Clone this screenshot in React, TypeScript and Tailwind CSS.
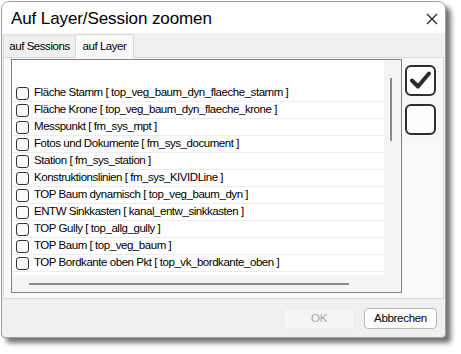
import React from "react";

const layers = [
  "Fläche Stamm [ top_veg_baum_dyn_flaeche_stamm ]",
  "Fläche Krone [ top_veg_baum_dyn_flaeche_krone ]",
  "Messpunkt [ fm_sys_mpt ]",
  "Fotos und Dokumente [ fm_sys_document ]",
  "Station [ fm_sys_station ]",
  "Konstruktionslinien [ fm_sys_KIVIDLine ]",
  "TOP Baum dynamisch [ top_veg_baum_dyn ]",
  "ENTW Sinkkasten [ kanal_entw_sinkkasten ]",
  "TOP Gully [ top_allg_gully ]",
  "TOP Baum [ top_veg_baum ]",
  "TOP Bordkante oben Pkt [ top_vk_bordkante_oben ]",
];

function CheckIcon() {
  return (
    <svg width="31" height="31" viewBox="0 0 31 31">
      <rect x="1" y="1" width="29" height="29" rx="5" fill="#fdfdfd" stroke="#2e2e2e" strokeWidth="2" />
      <path d="M7 15.5 L13 21.5 L24 8.5" fill="none" stroke="#2b2b2b" strokeWidth="4" strokeLinecap="round" strokeLinejoin="round" />
    </svg>
  );
}

function EmptyIcon() {
  return (
    <svg width="31" height="31" viewBox="0 0 31 31">
      <rect x="1" y="1" width="29" height="29" rx="5" fill="#fdfdfd" stroke="#2e2e2e" strokeWidth="2" />
    </svg>
  );
}

export default function App() {
  return (
    <div className="w-[461px] h-[354px] bg-white pt-px pl-px font-['Liberation_Sans',Arial,sans-serif] text-black">
      <div className="w-[445px] h-[337px] flex flex-col rounded-t-[8px] rounded-b-[4px] border border-[#9c9c9c] bg-[#f0f0f0] shadow-[5px_5px_5px_rgba(0,0,0,0.55)] overflow-hidden">
        {/* title bar */}
        <div className="h-[31px] shrink-0 bg-white flex items-center justify-between pl-[9px] pr-[7px]">
          <span className="text-[17px] leading-none pt-[2px] tracking-[-0.1px]">Auf Layer/Session zoomen</span>
          <svg width="12" height="12" viewBox="0 0 12 12" className="mt-[2px]">
            <path d="M1 1 L11 11 M11 1 L1 11" stroke="#222" strokeWidth="1.2" />
          </svg>
        </div>

        {/* tabs */}
        <div className="h-[24px] shrink-0 flex items-end pl-[1px] text-[11.5px] tracking-[-0.45px]">
          <div className="h-[22px] w-[73px] flex items-center justify-center border border-b-0 border-[#d9d9d9] bg-[#f0f0f0]">
            auf Sessions
          </div>
          <div className="h-[24px] w-[58px] flex items-center justify-center border border-b-0 border-l-0 border-[#d9d9d9] bg-[#f9f9f9] relative top-px z-10">
            auf Layer
          </div>
        </div>

        {/* tab page */}
        <div className="ml-px w-[441px] h-[242px] shrink-0 border border-[#d9d9d9] bg-[#f9f9f9] flex pl-[7px] pt-px">
          <div className="w-[391px] h-[234px] border border-[#828282] bg-white flex">
            <div className="w-[372px] flex flex-col">
              <div className="flex-1 pt-[25px] text-[11.5px] tracking-[-0.45px]">
                {layers.map((l) => (
                  <div key={l} className="h-[17px] flex items-center border-b border-[#ececec] pl-[4px] whitespace-nowrap overflow-hidden">
                    <span className="w-[13px] h-[13px] shrink-0 rounded-[3px] border border-[#333] bg-[#fafafa]" />
                    <span className="ml-[5px]">{l}</span>
                  </div>
                ))}
              </div>
              <div className="h-[17px] shrink-0 bg-[#f4f4f4] flex items-center pl-[17px]">
                <div className="w-[320px] h-[2px] bg-[#8a8a8a]" />
              </div>
            </div>
            <div className="w-[17px] bg-[#f4f4f4] pt-[18px] pl-[6px]">
              <div className="w-[2px] h-[63px] bg-[#8a8a8a]" />
            </div>
          </div>
          <div className="ml-[1px] mt-[2px] w-[42px] h-[80px] rounded-[4px] bg-[#f7f7f7] flex flex-col pl-[2px] pt-[4px] gap-[8px]">
            <CheckIcon />
            <EmptyIcon />
          </div>
        </div>

        {/* footer */}
        <div className="flex-1 flex justify-end items-start gap-[9px] pt-[9px] pr-[8px] text-[11.5px] tracking-[-0.3px]">
          <button className="w-[72px] h-[21px] rounded-[4px] border border-[#ececec] bg-[#f5f5f5] text-[#a6a6a6]">
            OK
          </button>
          <button className="w-[73px] h-[21px] rounded-[4px] border border-[#b8b8b8] bg-[#fdfdfd] text-black">
            Abbrechen
          </button>
        </div>
      </div>
    </div>
  );
}
